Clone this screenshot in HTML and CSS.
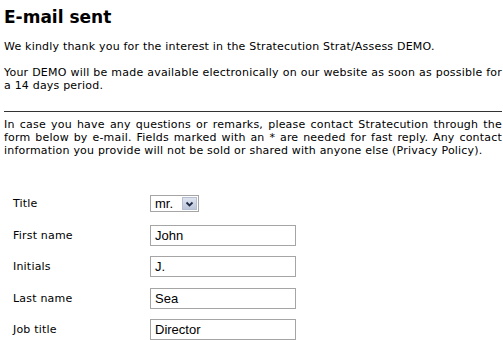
FILE: index.html
```html
<!DOCTYPE html>
<html lang="en">
<head>
  <meta charset="UTF-8" />
  <title>E-mail sent</title>
  <link rel="stylesheet" href="styles.css">
</head>
<body>
  <div class="page">
    <h1>E-mail sent</h1>
    <p>We kindly thank you for the interest in the Stratecution Strat/Assess DEMO.</p>
    <p>Your DEMO will be made available electronically on our website as soon as possible for a 14 days period.</p>
    <hr class="divider" />
    <p class="intro">In case you have any questions or remarks, please contact Stratecution through the form below by e-mail. Fields marked with an * are needed for fast reply. Any contact information you provide will not be sold or shared with anyone else (Privacy Policy).</p>

    <form class="contact-form">
      <label class="field-label">Title</label>
      <div class="select-box">
        <span class="select-value">mr.</span>
        <span class="select-btn">
          <svg width="11" height="10" viewBox="0 0 11 10"><path d="M2.5 3.5 L5.5 6.5 L8.5 3.5" fill="none" stroke="#1e2a44" stroke-width="1.8"/></svg>
        </span>
      </div>

      <label class="field-label">First name</label>
      <input class="text-input" type="text" value="John" />

      <label class="field-label">Initials</label>
      <input class="text-input" type="text" value="J." />

      <label class="field-label">Last name</label>
      <input class="text-input" type="text" value="Sea" />

      <label class="field-label">Job title</label>
      <input class="text-input" type="text" value="Director" />
    </form>
  </div>
</body>
</html>
```

FILE: styles.css
```css
/* Base */
* {
  box-sizing: border-box;
}

body {
  margin: 0;
  padding: 0 1px 0 4px;
  font-family: 'DejaVu Sans', Verdana, sans-serif;
  font-size: 11px;
  line-height: 13px;
  letter-spacing: 0.2px;
  color: #000;
  background-color: #fff;
}

h1 {
  margin: 7px 0 0 0;
  font-size: 17px;
  line-height: 20px;
  font-weight: bold;
  letter-spacing: 0;
}

p {
  margin: 13px 0 0 0;
  text-align: justify;
}

.divider {
  margin: 19px 0 0 0;
  border: none;
  border-top: 1px solid #333;
  height: 0;
}

.intro {
  margin-top: 6px;
}

/* Form */
.contact-form {
  display: grid;
  grid-template-columns: 137px 146px;
  grid-auto-rows: 21px;
  row-gap: 10.5px;
  align-items: center;
  margin-top: 36px;
  padding-left: 9px;
}

.field-label {
  font-size: 11px;
}

.text-input {
  width: 146px;
  height: 21px;
  border: 1px solid #a5a5a5;
  padding: 0 4px;
  font-family: 'Liberation Sans', Arial, sans-serif;
  font-size: 13px;
  letter-spacing: 0;
  color: #000;
  outline: none;
}

.select-box {
  display: flex;
  align-items: center;
  width: 49px;
  height: 17px;
  border: 1px solid #a5a5a5;
  padding: 1px;
  justify-self: start;
}

.select-value {
  flex: 1;
  padding-left: 3px;
  font-family: 'Liberation Sans', Arial, sans-serif;
  font-size: 13px;
  letter-spacing: 0;
}

.select-btn {
  display: flex;
  align-items: center;
  justify-content: center;
  width: 15px;
  height: 13px;
  background: linear-gradient(#dfe4ef, #bcc6da);
  border: 1px solid #b6bfd2;
}
```
